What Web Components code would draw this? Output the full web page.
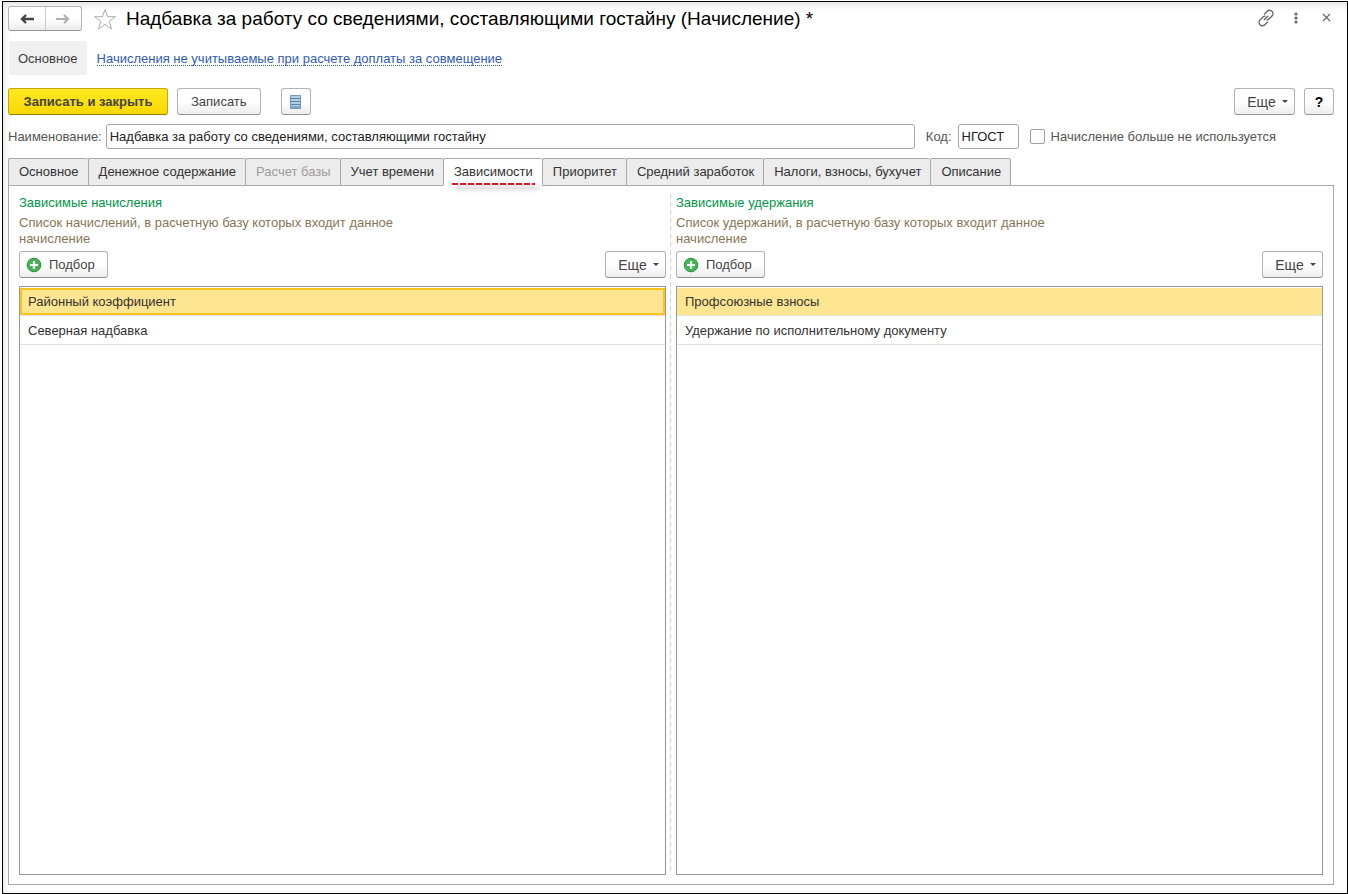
<!DOCTYPE html>
<html lang="ru">
<head>
<meta charset="utf-8">
<title>Надбавка за работу со сведениями, составляющими гостайну (Начисление)</title>
<style>
  html { height: 100%; }
  body {
    margin: 0; min-height: 100%; box-sizing: border-box;
    padding: 1px 0 0 2px; display: flex; flex-direction: column;
    background: #fff; color: #3c3c3c;
    font: 13px/16px "Liberation Sans", Arial, sans-serif;
  }
</style>
</head>
<body>
<accrual-form></accrual-form>

<template id="form-tpl">
  <style>
    :host {
      flex: 1; display: flex; flex-direction: column; box-sizing: border-box;
      border: 1px solid #000; padding: 4px 13px 8px 5px;
      box-shadow: inset 0 8px 6px -4px #e6e6e6, inset 6px 0 5px -3px #ececec;
    }
    .bar { display: flex; align-items: center; gap: 9px; }
    .commands { margin-top: 13px; }
    .commands .list { margin-left: 11px; }
    .commands .more { margin-left: auto; }
    .fields { margin-top: 9px; padding-right: 58px; gap: 11px; }
    .name { flex: 1; }
    .panel {
      flex: 1; display: flex; border: 1px solid #a9a9a9; margin-top: -1px;
      padding: 8px 10px 9px;
    }
    dependency-list { flex: 1 1 0; min-width: 0; }
    .divider {
      width: 1px; margin: 0 5px 0 4px;
      background: repeating-linear-gradient(#d2d2d2 0 5px, transparent 5px 8px);
    }
  </style>
  <form-header title-text="Надбавка за работу со сведениями, составляющими гостайну (Начисление) *"></form-header>
  <form-links></form-links>
  <div class="bar commands">
    <ui-button kind="primary">Записать и закрыть</ui-button>
    <ui-button>Записать</ui-button>
    <ui-button class="list" kind="icon" label="Список">
      <svg width="11" height="14" viewBox="0 0 11 14"><path d="M.5.5h10v13H.5z" fill="#b4cfe6" stroke="#7397b8"/><path d="M1 3.500h9M1 6.500h9M1 9.500h9M1 12h9" stroke="#5681a8"/></svg>
    </ui-button>
    <ui-button class="more" kind="menu">Еще</ui-button>
    <ui-button kind="help" label="Справка">?</ui-button>
  </div>
  <div class="bar fields">
    <text-field class="name" label="Наименование:" value="Надбавка за работу со сведениями, составляющими гостайну"></text-field>
    <text-field label="Код:" value="НГОСТ" short></text-field>
    <check-field label="Начисление больше не используется"></check-field>
  </div>
  <tab-strip></tab-strip>
  <div class="panel" role="tabpanel">
    <dependency-list heading="Зависимые начисления"
      note="Список начислений, в расчетную базу которых входит данное начисление"
      rows="Районный коэффициент|Северная надбавка" focused></dependency-list>
    <div class="divider"></div>
    <dependency-list heading="Зависимые удержания"
      note="Список удержаний, в расчетную базу которых входит данное начисление"
      rows="Профсоюзные взносы|Удержание по исполнительному документу"></dependency-list>
  </div>
</template>

<template id="header-tpl">
  <style>
    :host { display: flex; align-items: center; height: 25px; }
    button { padding: 0; border: 0; background: none; display: flex; align-items: center; justify-content: center; }
    .nav {
      display: flex; box-sizing: border-box; width: 74px; height: 25px;
      border: 1px solid #b4b4b4; border-bottom-color: #989898; border-radius: 3px;
      background: linear-gradient(#fff 50%, #ececec);
    }
    .nav button { flex: 1; }
    .nav button + button { border-left: 1px solid #c8c8c8; }
    .star { margin: 0 9px 0 11px; }
    h1 { flex: 1; margin: 0; font-size: 19px; line-height: 24px; font-weight: 400; color: #000; white-space: nowrap; }
    .tools { display: flex; align-self: flex-start; margin-right: -7px; }
    .tools button { width: 30px; height: 23px; }
  </style>
  <div class="nav">
    <button aria-label="Назад"><svg width="14" height="10" viewBox="0 0 14 10"><path d="M14 5H3M6 1L2 5l4 4" fill="none" stroke="#444" stroke-width="2.400"/></svg></button>
    <button aria-label="Вперед"><svg width="14" height="10" viewBox="0 0 14 10"><path d="M0 5h11M8 1l4 4-4 4" fill="none" stroke="#b0b0b0" stroke-width="2.200"/></svg></button>
  </div>
  <button class="star" aria-label="В избранное"><svg width="24" height="22" viewBox="0 0 24 22"><path d="M12 1.500l2.600 7.200h7.900l-6.300 4.700 2.400 7.600L12 16.300 5.400 21l2.400-7.600L1.500 8.700h7.900z" fill="#fff" stroke="#a8b0b6"/></svg></button>
  <h1></h1>
  <div class="tools">
    <button aria-label="Ссылка"><svg width="18" height="18" viewBox="0 0 18 18" fill="none" stroke="#666" stroke-width="1.300" stroke-linecap="round"><path d="M7.500 5l2.700-2.700a3.300 3.300 0 0 1 4.800 0 3.300 3.300 0 0 1 0 4.700l-3 3a3.200 3.200 0 0 1-2 .8M10.500 13l-2.700 2.700a3.300 3.300 0 0 1-4.800 0 3.300 3.300 0 0 1 0-4.700l3-3a3.200 3.200 0 0 1 2-.8M7.200 10.800l3.600-3.600"/></svg></button>
    <button aria-label="Действия"><svg width="4" height="12" viewBox="0 0 4 12" fill="#666"><circle cx="2" cy="2" r="1.600"/><circle cx="2" cy="6" r="1.600"/><circle cx="2" cy="10" r="1.600"/></svg></button>
    <button aria-label="Закрыть"><svg width="9" height="9" viewBox="0 0 9 9"><path d="M1 1l7 7M8 1L1 8" stroke="#666" stroke-width="1.200"/></svg></button>
  </div>
</template>

<template id="links-tpl">
  <style>
    :host { display: flex; align-items: baseline; gap: 10px; margin-top: 10px; }
    a { color: #2f5bb7; text-decoration: none; border-bottom: 1px dotted #2f5bb7; line-height: 12px; }
    a.current { color: #3c3c3c; background: #f0f0f0; border: 0; border-radius: 3px; padding: 2px 9px 0; margin-left: 1px; line-height: 32px; }
  </style>
  <a class="current" href="#main">Основное</a>
  <a href="#excluded">Начисления не учитываемые при расчете доплаты за совмещение</a>
</template>

<template id="button-tpl">
  <style>
    :host { display: block; }
    button {
      display: flex; align-items: center; justify-content: center; box-sizing: border-box;
      height: 27px; padding: 0 13px; white-space: nowrap;
      border: 1px solid #b4b4b4; border-bottom-color: #929292; border-radius: 3px;
      background: linear-gradient(#fff 50%, #ededed);
      font: inherit; color: #444;
    }
    :host([kind="primary"]) button {
      background: linear-gradient(#ffe925, #f8d800); border-color: #c5a900 #c5a900 #967f00;
      font-weight: 700; width: 160px;
    }
    :host([kind="icon"]) button, :host([kind="help"]) button { width: 30px; padding: 0; }
    :host([kind="help"]) button { font-size: 14px; font-weight: 700; color: #000; }
    :host([kind="menu"]) button { font-size: 14px; width: 61px; padding: 0 0 0 6px; gap: 6px; }
    :host([kind="menu"]) button::after { content: ""; border: 3px solid transparent; border-top-color: #444; border-bottom: 0; }
    :host([kind="add"]) button { width: 89px; padding: 0 6px; gap: 7px; justify-content: flex-start; }
    ::slotted(svg) { display: block; }
  </style>
  <button type="button"><slot></slot></button>
</template>

<template id="text-tpl">
  <style>
    :host { display: flex; align-items: center; gap: 4px; }
    :host([short]) { gap: 6px; }
    label { white-space: nowrap; color: #555; }
    input {
      flex: 1; min-width: 0; box-sizing: border-box; height: 25px; padding: 0 3px;
      border: 1px solid #a6a6a6; border-radius: 3px; background: #fff;
      font: inherit; color: #222; outline: 0;
    }
    :host([short]) input { flex: none; width: 61px; }
  </style>
  <label for="field"></label><input id="field" type="text">
</template>

<template id="check-tpl">
  <style>
    :host { display: flex; align-items: center; gap: 6px; }
    input { appearance: none; margin: 0; width: 15px; height: 15px; border: 1px solid #a0a0a0; border-radius: 2px; background: #fff; box-sizing: border-box; }
    input:checked { background: #777; }
    label { color: #555; white-space: nowrap; }
  </style>
  <input id="check" type="checkbox"><label for="check"></label>
</template>

<template id="tabs-tpl">
  <style>
    :host { display: flex; margin-top: 9px; }
    button {
      position: relative; height: 28px; box-sizing: border-box; padding: 0 9px 0 10px; white-space: nowrap;
      border: 1px solid #a9a9a9; border-right-width: 0; background: #ececec;
      font: inherit; color: #333; border-radius: 2px 2px 0 0;
    }
    button:last-child { border-right-width: 1px; }
    button:disabled { color: #9c9c9c; }
    button[aria-selected="true"] { background: #fff; border-bottom-color: #fff; }
    button[aria-selected="true"]::after {
      content: ""; position: absolute; left: 8px; right: 7px; bottom: 0; height: 2px;
      background: repeating-linear-gradient(90deg, #f01020 0 6px, transparent 6px 8px);
      filter: drop-shadow(4px 4px 2px #999);
    }
  </style>
</template>

<template id="list-tpl">
  <style>
    :host { display: flex; flex-direction: column; }
    h2 { margin: 0; font-size: 13px; line-height: 18px; font-weight: 400; color: #009646; }
    p { margin: 3px 0 4px; max-width: 400px; color: #857755; }
    .bar { display: flex; justify-content: space-between; }
    .box { flex: 1; margin-top: 8px; border: 1px solid #989898; }
    table { width: 100%; border-collapse: separate; border-spacing: 0; }
    td {
      height: 29px; box-sizing: border-box; padding: 0 8px; color: #333;
      border-top: 1px solid transparent; border-bottom: 1px solid #e2e2e2;
    }
    tr:first-child td { background: #fee591; background-clip: padding-box; }
    :host([focused]) tr:first-child td { box-shadow: inset 0 0 0 2px #f9c41d; }
  </style>
  <h2></h2>
  <p></p>
  <div class="bar">
    <ui-button kind="add">
      <svg width="16" height="16" viewBox="0 0 16 16"><circle cx="8" cy="8" r="6.800" fill="#45b655" stroke="#268f38"/><path d="M8 4v8M4 8h8" stroke="#fff" stroke-width="2.200"/></svg>
      <span>Подбор</span>
    </ui-button>
    <ui-button kind="menu">Еще</ui-button>
  </div>
  <div class="box"><table><tbody></tbody></table></div>
</template>

<script>
  class TemplateElement extends HTMLElement {
    constructor() {
      super();
      this.attachShadow({ mode: 'open' })
        .append(document.getElementById(this.constructor.template).content.cloneNode(true));
    }
    find(selector) { return this.shadowRoot.querySelector(selector); }
  }

  class UiButton extends TemplateElement {
    static template = 'button-tpl';
    connectedCallback() {
      if (this.hasAttribute('label')) this.find('button').setAttribute('aria-label', this.getAttribute('label'));
    }
  }

  class FormHeader extends TemplateElement {
    static template = 'header-tpl';
    connectedCallback() { this.find('h1').textContent = this.getAttribute('title-text'); }
  }

  class FormLinks extends TemplateElement { static template = 'links-tpl'; }

  class TextField extends TemplateElement {
    static template = 'text-tpl';
    connectedCallback() {
      this.find('label').textContent = this.getAttribute('label');
      this.find('input').value = this.getAttribute('value');
    }
  }

  class CheckField extends TemplateElement {
    static template = 'check-tpl';
    connectedCallback() { this.find('label').textContent = this.getAttribute('label'); }
  }

  class TabStrip extends TemplateElement {
    static template = 'tabs-tpl';
    connectedCallback() {
      this.setAttribute('role', 'tablist');
      const names = ['Основное', 'Денежное содержание', 'Расчет базы', 'Учет времени', 'Зависимости',
        'Приоритет', 'Средний заработок', 'Налоги, взносы, бухучет', 'Описание'];
      for (const name of names) {
        const tab = document.createElement('button');
        tab.type = 'button';
        tab.textContent = name;
        tab.setAttribute('role', 'tab');
        tab.setAttribute('aria-selected', String(name === 'Зависимости'));
        tab.disabled = name === 'Расчет базы';
        this.shadowRoot.append(tab);
      }
    }
  }

  class DependencyList extends TemplateElement {
    static template = 'list-tpl';
    connectedCallback() {
      this.find('h2').textContent = this.getAttribute('heading');
      this.find('p').textContent = this.getAttribute('note');
      for (const text of this.getAttribute('rows').split('|')) {
        this.find('tbody').insertRow().insertCell().textContent = text;
      }
    }
  }

  class AccrualForm extends TemplateElement { static template = 'form-tpl'; }

  customElements.define('ui-button', UiButton);
  customElements.define('form-header', FormHeader);
  customElements.define('form-links', FormLinks);
  customElements.define('text-field', TextField);
  customElements.define('check-field', CheckField);
  customElements.define('tab-strip', TabStrip);
  customElements.define('dependency-list', DependencyList);
  customElements.define('accrual-form', AccrualForm);
</script>
</body>
</html>
